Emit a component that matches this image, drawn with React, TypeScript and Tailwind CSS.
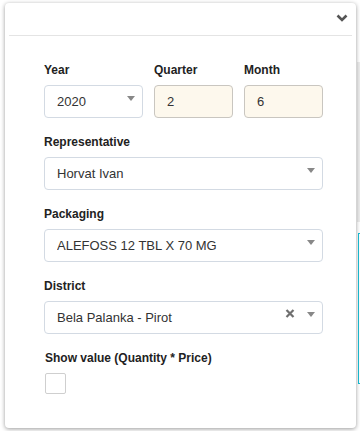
import React from 'react';

const Arrow = () => (
    <span className="mt-[10px] mr-[7px] h-0 w-0 shrink-0 self-start border-x-[4px] border-t-[5px] border-x-transparent border-t-[#888]" />
);

interface SelectBoxProps {
    value: string;
    clearable?: boolean;
    className?: string;
}

function SelectBox({ value, clearable, className = '' }: SelectBoxProps) {
    return (
        <div className={`flex h-[33px] items-center rounded-[4px] border border-[#d3dae3] bg-white pl-[12px] ${className}`}>
            <span className="min-w-0 flex-1 truncate text-[13px] text-[#333]">{value}</span>
            {clearable && (
                <svg width="10" height="9" viewBox="0 0 10 9" className="mt-[7px] mr-[12px] shrink-0 self-start">
                    <path d="M1.5 1 L8.5 8 M8.5 1 L1.5 8" stroke="#6f6f6f" strokeWidth="2.2" />
                </svg>
            )}
            <Arrow />
        </div>
    );
}

function Label({ children }: { children: React.ReactNode }) {
    return <div className="mb-[8px] text-[12px] leading-[14px] font-bold text-[#222]">{children}</div>;
}

export default function App() {
    return (
        <div className="relative h-[431px] w-[360px] overflow-hidden bg-white" style={{ fontFamily: '"Liberation Sans", Arial, sans-serif' }}>
            {/* page behind the panel */}
            <div className="absolute top-[62px] left-[357px] h-[160px] w-[3px] bg-[#ececec]" />
            <div className="absolute top-[233px] left-[358px] h-[151px] w-[4px] border border-[#19bfd6]" />

            <div className="relative mt-[3px] ml-[5px] h-[425px] w-[351px] rounded-[4px] bg-white shadow-[0_1px_4px_rgba(0,0,0,0.4)]">
                {/* header */}
                <div className="flex h-[32px] items-center justify-end pr-[8px]">
                    <svg width="12" height="8" viewBox="0 0 12 8" className="mb-[2px] shrink-0">
                        <path d="M1.5 1.5 L6 6 L10.5 1.5" fill="none" stroke="#555" strokeWidth="2.6" />
                    </svg>
                </div>
                <div className="mx-[4px] h-px bg-[#e4e4e4]" />

                <div className="ml-[39px] w-[279px] pt-[27px]">
                    <div className="flex gap-[11px]">
                        <div className="w-[99px]">
                            <Label>Year</Label>
                            <SelectBox value="2020" />
                        </div>
                        <div className="w-[79px]">
                            <Label>Quarter</Label>
                            <div className="flex h-[33px] items-center rounded-[4px] border border-[#c9c6c0] bg-[#fdf8ed] pl-[12px] text-[13px] text-[#333]">2</div>
                        </div>
                        <div className="w-[79px]">
                            <Label>Month</Label>
                            <div className="flex h-[33px] items-center rounded-[4px] border border-[#c9c6c0] bg-[#fdf8ed] pl-[12px] text-[13px] text-[#333]">6</div>
                        </div>
                    </div>

                    <div className="mt-[17px]">
                        <Label>Representative</Label>
                        <SelectBox value="Horvat Ivan" />
                    </div>

                    <div className="mt-[17px]">
                        <Label>Packaging</Label>
                        <SelectBox value="ALEFOSS 12 TBL X 70 MG" />
                    </div>

                    <div className="mt-[17px]">
                        <Label>District</Label>
                        <SelectBox value="Bela Palanka - Pirot" clearable />
                    </div>

                    <div className="mt-[17px] pl-px">
                        <Label>Show value (Quantity * Price)</Label>
                        <div className="h-[21px] w-[21px] rounded-[2px] border border-[#cfcfcf] bg-white" />
                    </div>
                </div>
            </div>
        </div>
    );
}
